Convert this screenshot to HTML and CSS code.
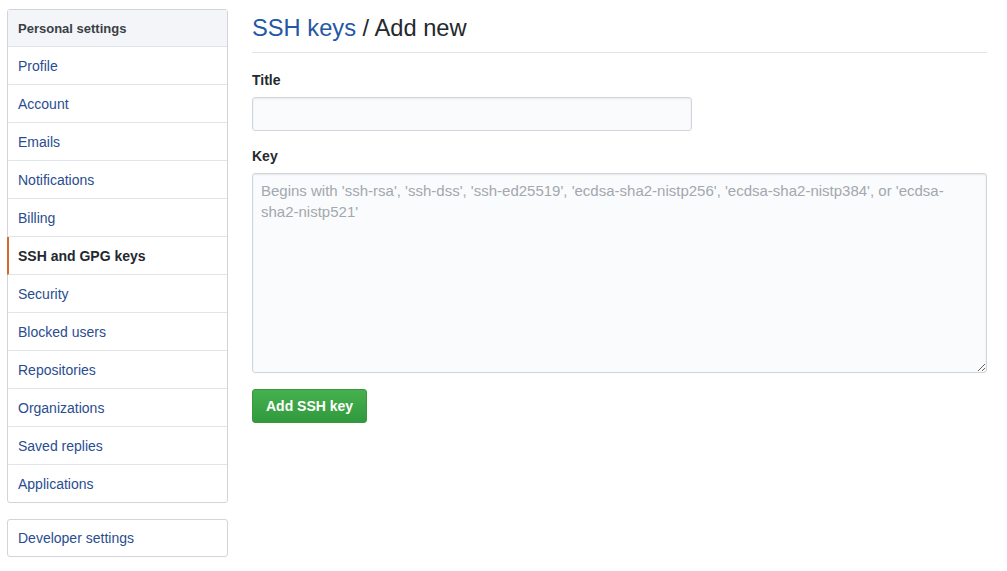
FILE: index.html
```html
<!DOCTYPE html>
<html>
<head>
<meta charset="utf-8">
<link rel="stylesheet" href="styles.css">
</head>
<body>
<div class="page">
  <aside class="sidebar">
    <nav class="menu">
      <div class="menu-heading">Personal settings</div>
      <a class="menu-item">Profile</a>
      <a class="menu-item">Account</a>
      <a class="menu-item">Emails</a>
      <a class="menu-item">Notifications</a>
      <a class="menu-item">Billing</a>
      <a class="menu-item selected">SSH and GPG keys</a>
      <a class="menu-item">Security</a>
      <a class="menu-item">Blocked users</a>
      <a class="menu-item">Repositories</a>
      <a class="menu-item">Organizations</a>
      <a class="menu-item">Saved replies</a>
      <a class="menu-item">Applications</a>
    </nav>
    <nav class="menu">
      <a class="menu-item">Developer settings</a>
    </nav>
  </aside>
  <main class="content">
    <h2 class="subhead"><a class="subhead-link">SSH keys</a> / Add new</h2>
    <form class="form">
      <div class="form-group">
        <label class="label">Title</label>
        <input class="input title-input" type="text">
      </div>
      <div class="form-group">
        <label class="label">Key</label>
        <textarea class="input key-input" placeholder="Begins with 'ssh-rsa', 'ssh-dss', 'ssh-ed25519', 'ecdsa-sha2-nistp256', 'ecdsa-sha2-nistp384', or 'ecdsa-sha2-nistp521'"></textarea>
      </div>
      <div class="actions">
        <button class="btn-primary" type="button">Add SSH key</button>
      </div>
    </form>
  </main>
</div>
</body>
</html>
```
FILE: styles.css
```css
* { box-sizing: border-box; }
body {
  margin: 0;
  background: #fff;
  font-family: "Liberation Sans", Arial, sans-serif;
  font-size: 14px;
  color: #24292e;
}
.page {
  display: flex;
  padding: 9px 20px 0 7px;
  gap: 24px;
}
.sidebar {
  width: 221px;
  flex: none;
  display: flex;
  flex-direction: column;
  gap: 16px;
}
.menu {
  border: 1px solid #d1d5da;
  border-radius: 3px;
  background: #fff;
  display: flex;
  flex-direction: column;
}
.menu-heading {
  height: 37px;
  display: flex;
  align-items: center;
  padding: 0 10px;
  background: #f3f5f8;
  font-size: 13px;
  font-weight: bold;
  color: #3a3f45;
  border-bottom: 1px solid #e1e4e8;
}
.menu-item {
  height: 38px;
  display: flex;
  align-items: center;
  color: #2a4d8f;
  border-bottom: 1px solid #e1e4e8;
  border-left: 2px solid transparent;
  margin-left: -1px;
  padding: 0 10px 0 9px;
}
.menu-item:last-child { border-bottom: none; height: 37px; }
.menu .menu-item:only-child { height: 36px; }
.menu-item.selected {
  border-left-color: #d8692e;
  font-weight: bold;
  color: #24292e;
}
.content {
  flex: 1;
  min-width: 0;
}
.subhead {
  margin: 0;
  font-size: 23.7px;
  font-weight: normal;
  line-height: 36px;
  padding-top: 1px;
  padding-bottom: 6px;
  border-bottom: 1px solid #e1e4e8;
  color: #24292e;
}
.subhead-link { color: #2457a5; }
.form { padding-top: 18px; }
.form-group { display: flex; flex-direction: column; margin-bottom: 16px; }
.label {
  font-weight: bold;
  font-size: 14px;
  line-height: 18px;
  margin-bottom: 8px;
}
.input {
  border: 1px solid #d1d5da;
  border-radius: 3px;
  background: #fafbfc;
  box-shadow: inset 0 1px 2px rgba(27,31,35,0.075);
  font-family: "Liberation Sans", Arial, sans-serif;
  font-size: 14px;
  color: #24292e;
}
.title-input { width: 440px; height: 34px; }
.key-input {
  width: 100%;
  height: 200px;
  padding: 6px 8px;
  font-size: 15px;
  line-height: 21px;
  resize: vertical;
}
.key-input::placeholder { color: #a3a8ae; }
.btn-primary {
  height: 34px;
  padding: 0 13px;
  border: 1px solid #3c963f;
  border-radius: 3px;
  background: linear-gradient(#47b04e, #2f9a3d);
  color: #fff;
  font-family: "Liberation Sans", Arial, sans-serif;
  font-size: 14px;
  font-weight: bold;
}
```
